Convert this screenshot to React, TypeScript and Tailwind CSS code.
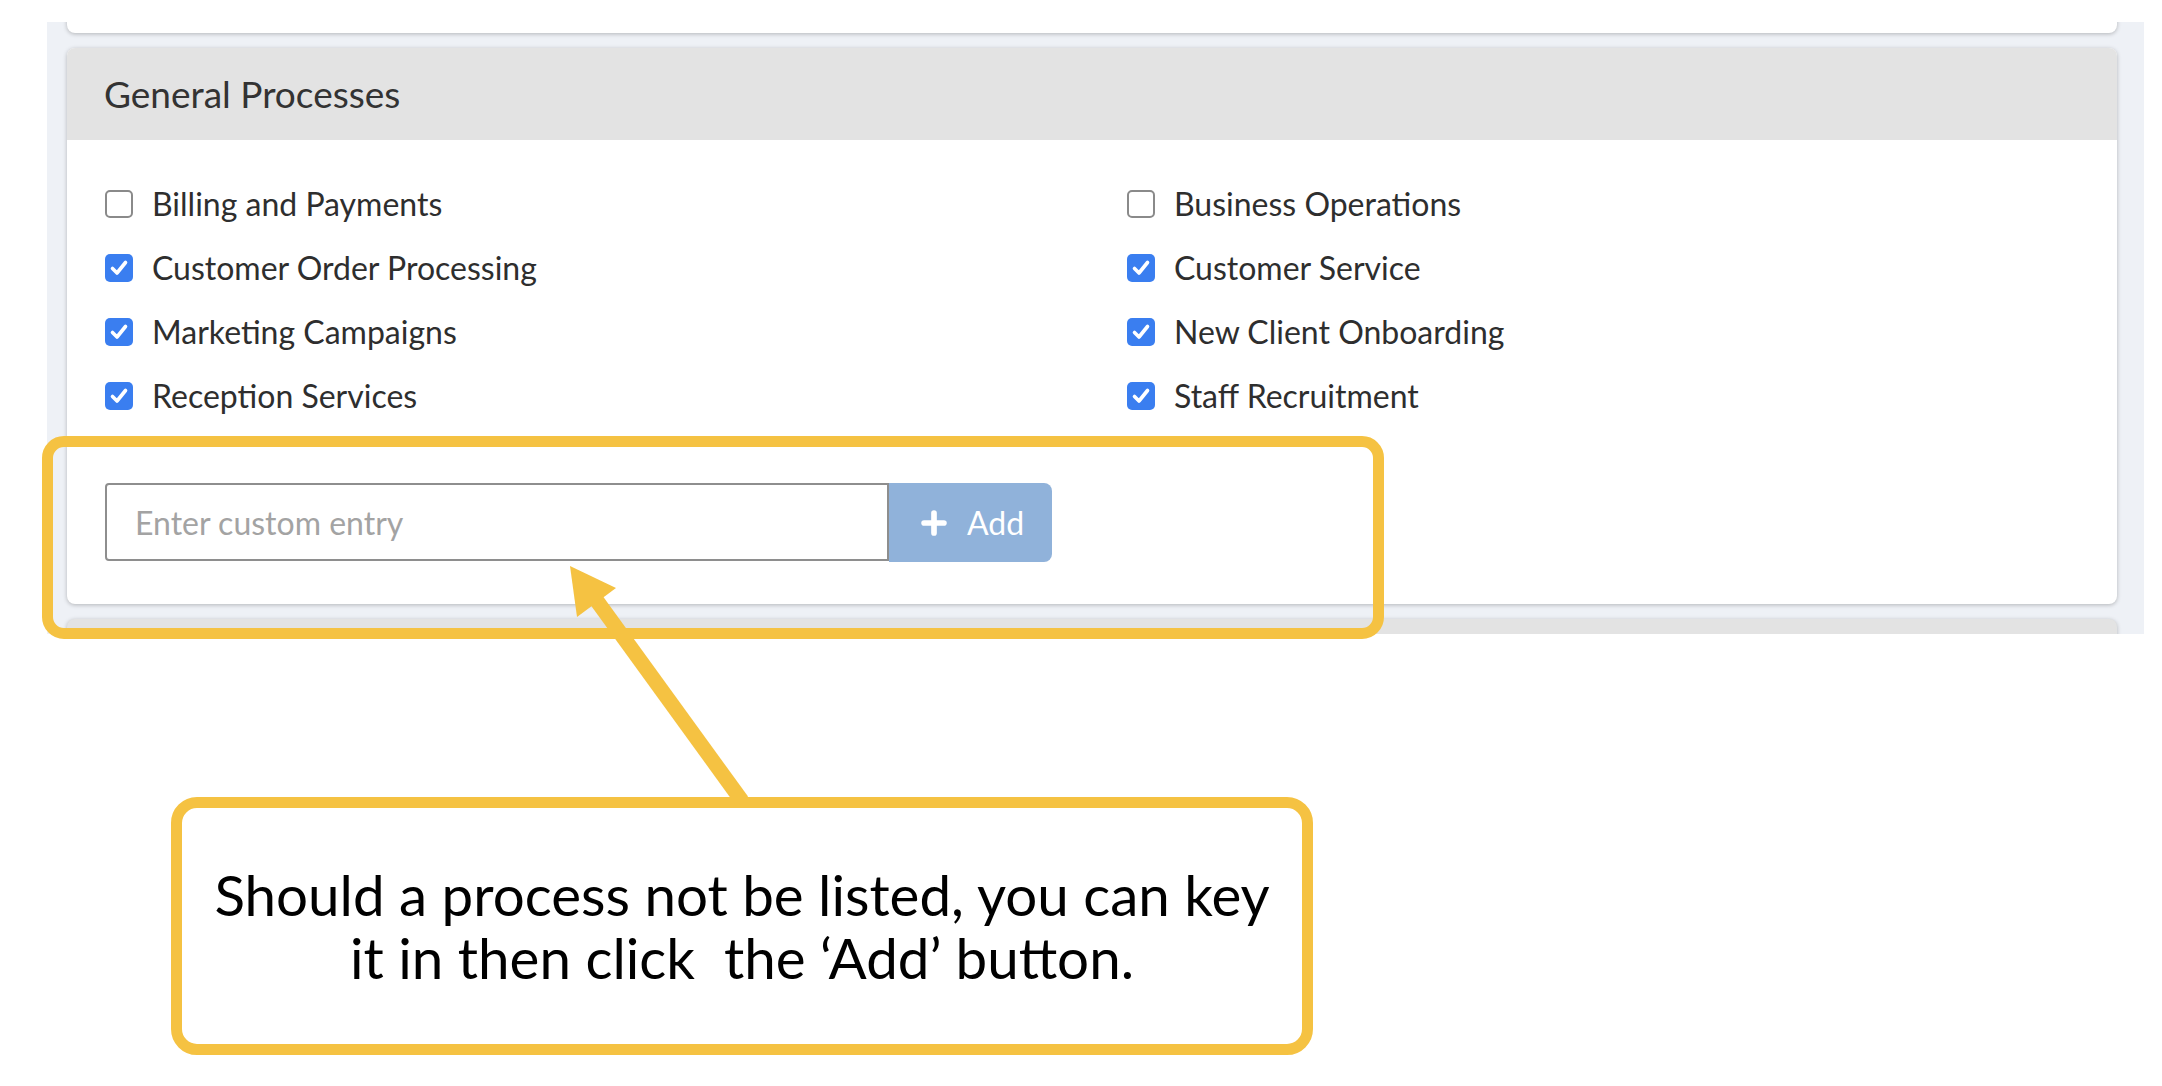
import { Plus } from 'lucide-react'

const left = [
    { label: 'Billing and Payments', checked: false },
    { label: 'Customer Order Processing', checked: true },
    { label: 'Marketing Campaigns', checked: true },
    { label: 'Reception Services', checked: true },
]

const right = [
    { label: 'Business Operations', checked: false },
    { label: 'Customer Service', checked: true },
    { label: 'New Client Onboarding', checked: true },
    { label: 'Staff Recruitment', checked: true },
]

function Box({ checked }: { checked: boolean }) {
    if (!checked) {
        return <span className="w-[28px] h-[28px] shrink-0 rounded-[5px] border-2 border-[#8a8a8a] bg-white" />
    }
    return (
        <span className="w-[28px] h-[28px] shrink-0 rounded-[5px] bg-[#3a7ef0] flex items-center justify-center">
            <svg width="28" height="28" viewBox="0 0 28 28">
                <polyline points="7.5,14.5 12,19 20.5,8.5" fill="none" stroke="white" strokeWidth="3.6" strokeLinecap="round" strokeLinejoin="round" />
            </svg>
        </span>
    )
}

function Row({ label, checked }: { label: string; checked: boolean }) {
    return (
        <div className="h-[64px] flex items-center gap-[19px]">
            <Box checked={checked} />
            <span className="text-[32px] text-[#2e2e2e]">{label}</span>
        </div>
    )
}

export default function App() {
    return (
        <div className="relative w-[2162px] h-[1086px] bg-white overflow-hidden font-['Lato',sans-serif]">
            {/* screenshot of the form */}
            <div className="ml-[47px] mt-[22px] w-[2097px] h-[612px] bg-[#eef1f6] overflow-hidden pl-[20px] pr-[27px] flex flex-col gap-[15px]">
                <div className="-mt-[50px] h-[61px] shrink-0 rounded-lg bg-white shadow-[0_1px_4px_rgba(0,0,0,0.25)]" />

                <div className="shrink-0 rounded-lg bg-white overflow-hidden shadow-[0_1px_4px_rgba(0,0,0,0.25)]">
                    <div className="h-[92px] bg-[#e3e3e3] flex items-center pl-[37px] text-[37px] text-[#333]">
                        General Processes
                    </div>
                    <div className="pt-[32px] pb-[42px] px-[38px]">
                        <div className="grid grid-cols-[1022px_1fr]">
                            <div>
                                {left.map((r) => <Row key={r.label} {...r} />)}
                            </div>
                            <div>
                                {right.map((r) => <Row key={r.label} {...r} />)}
                            </div>
                        </div>
                        <div className="mt-[55px] flex">
                            <input
                                placeholder="Enter custom entry"
                                className="w-[784px] h-[78px] border-2 border-[#8e8e8e] rounded-l-[4px] pl-[28px] text-[32px] text-[#333] placeholder:text-[#a3a3a3] outline-none"
                            />
                            <button className="w-[163px] h-[79px] bg-[#90b2da] rounded-r-[8px] flex items-center justify-center gap-[16px] text-white text-[32px]">
                                <Plus size={34} strokeWidth={4} />
                                Add
                            </button>
                        </div>
                    </div>
                </div>

                <div className="shrink-0 h-[60px] rounded-lg bg-[#e3e3e3] shadow-[0_1px_4px_rgba(0,0,0,0.25)]" />
            </div>

            {/* callout */}
            <div className="mt-[163px] ml-[171px] w-[1142px] h-[258px] border-[11px] border-[#f5c242] rounded-[26px] flex items-center justify-center">
                <p className="text-center whitespace-pre text-[56.5px] leading-[63px] text-black">
                    {'Should a process not be listed, you can key\nit in then click  the \u2018Add\u2019 button.'}
                </p>
            </div>

            {/* highlight around the input */}
            <div className="absolute left-[42px] top-[436px] w-[1342px] h-[203px] border-[11px] border-[#f5c242] rounded-[22px]" />

            {/* arrow */}
            <svg className="absolute left-0 top-0 pointer-events-none" width="2162" height="1086">
                <line x1="597" y1="601" x2="742" y2="801" stroke="#f5c242" strokeWidth="15" />
                <polygon points="570,566 616,588 577,617" fill="#f5c242" />
            </svg>
        </div>
    )
}
